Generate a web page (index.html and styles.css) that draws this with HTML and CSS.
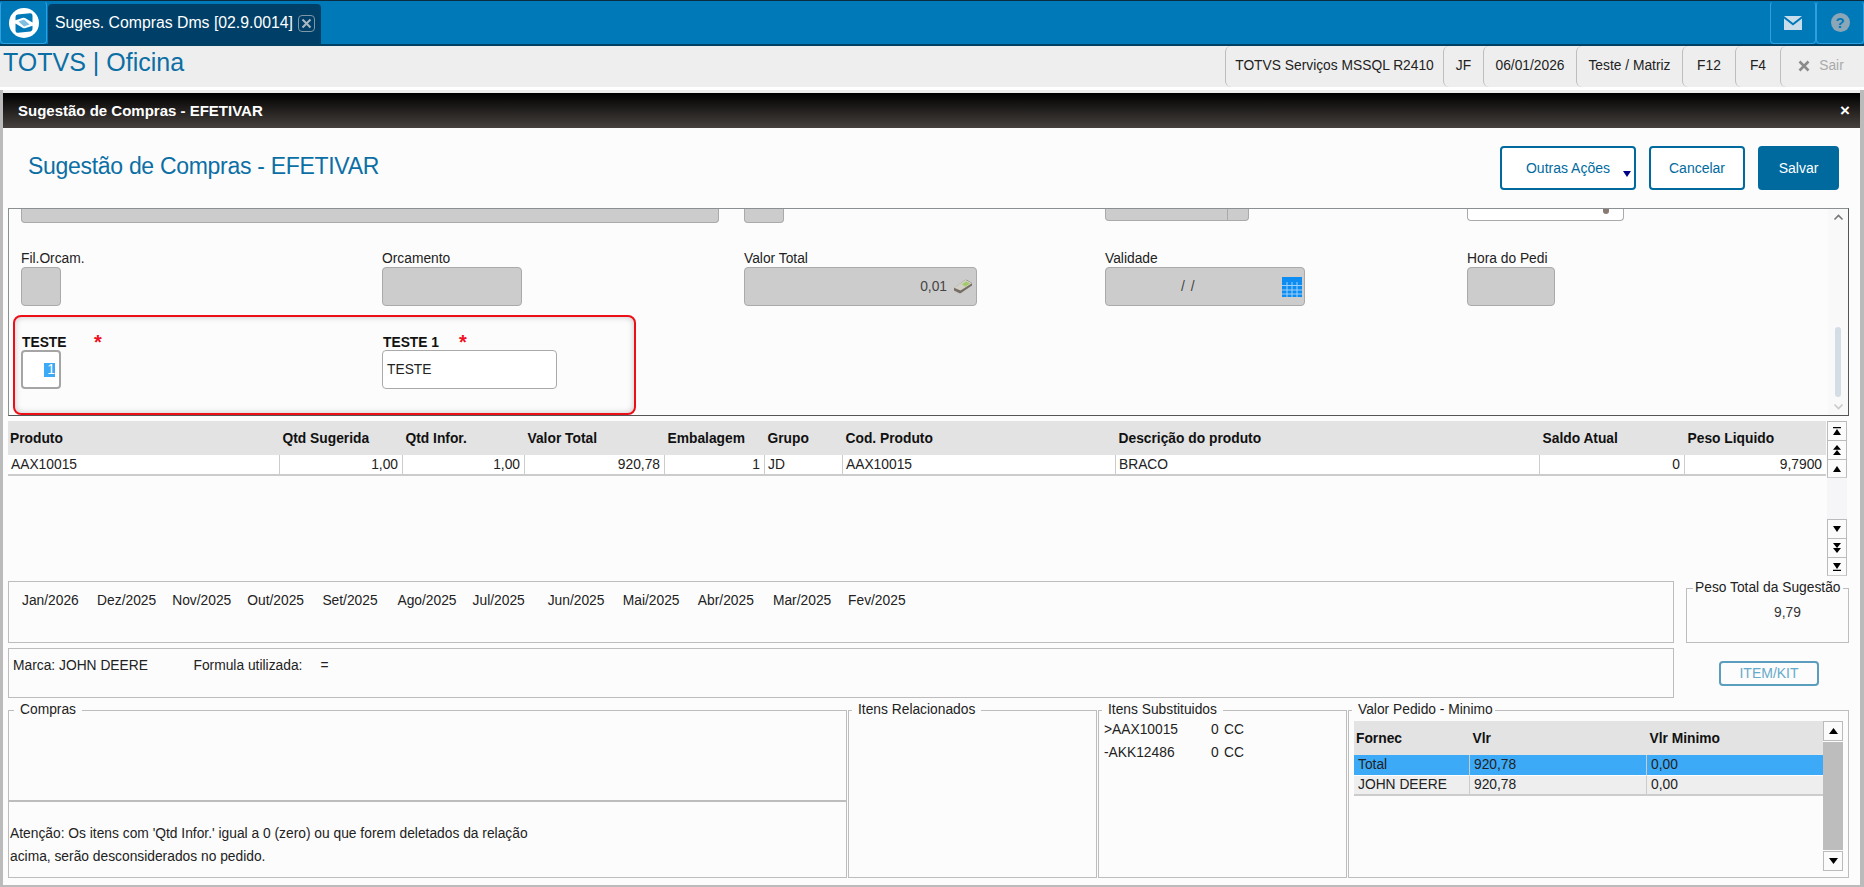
FILE: index.html
```html
<!DOCTYPE html>
<html lang="pt-BR">
<head>
<meta charset="utf-8">
<title>Sugestão de Compras - EFETIVAR</title>
<link rel="stylesheet" href="styles.css">
</head>
<body>
<div class="page">
  <header class="appbar">
    <div class="tile tile-logo">
      <svg width="32" height="32" viewBox="0 0 32 32"><circle cx="16" cy="16" r="15" fill="#fff"/><path d="M7.5 10 Q7.5 8 9.5 7.6 L22 6.2 Q24.5 6 24.5 9 V15.5 L17 11 Q16 10.5 15 10.8 L7.5 13.2Z" fill="#0079b8"/><path d="M24.5 22 Q24.5 24 22.5 24.4 L10 25.8 Q7.5 26 7.5 23 V16.5 L15 21 Q16 21.5 17 21.2 L24.5 18.8Z" fill="#0079b8"/><path d="M10.5 14.6 L16 12.6 L21.5 17.4 L16 19.4Z" fill="#7fc0e2"/></svg>
    </div>
    <div class="tab">
      <span>Suges. Compras Dms [02.9.0014]</span>
      <span class="tab-close"><svg width="11" height="11" viewBox="0 0 11 11"><path d="M1.5 1.5 L9.5 9.5 M9.5 1.5 L1.5 9.5" stroke="#a9b8c2" stroke-width="2"/></svg></span>
    </div>
    <div class="appbar-fill"></div>
    <div class="tile tile-tool">
      <svg width="22" height="14" viewBox="0 0 22 14"><path d="M0 0 H18 L9 7Z M0 2.4 L9 9.4 L18 2.4 V14 H0Z" fill="#c9deea" transform="translate(2 0)"/></svg>
    </div>
    <div class="tile tile-tool tile-help">
      <span class="help-dot">?</span>
    </div>
  </header>

  <div class="infobar">
    <div class="brand">TOTVS | Oficina</div>
    <nav class="segs">
      <span class="seg seg-env">TOTVS Serviços MSSQL R2410</span>
      <span class="seg seg-jf">JF</span>
      <span class="seg seg-date">06/01/2026</span>
      <span class="seg seg-branch">Teste / Matriz</span>
      <span class="seg seg-f12">F12</span>
      <span class="seg seg-f4">F4</span>
      <span class="seg seg-exit"><svg width="12" height="12" viewBox="0 0 12 12"><path d="M1.5 1.5 L10.5 10.5 M10.5 1.5 L1.5 10.5" stroke="#8b8b8b" stroke-width="2.6"/></svg>Sair</span>
    </nav>
  </div>

  <div class="stage">
    <main class="modal">
      <div class="modal-head">
        <span>Sugestão de Compras - EFETIVAR</span>
        <span class="modal-x">×</span>
      </div>
      <div class="modal-body">
        <div class="title-row">
          <h1>Sugestão de Compras - EFETIVAR</h1>
          <div class="actions">
            <button class="btn btn-more">Outras Ações<i class="caret"></i></button>
            <button class="btn btn-cancel">Cancelar</button>
            <button class="btn btn-save">Salvar</button>
          </div>
        </div>

        <section class="panel">
          <div class="form">
            <div class="form-grid clip-row">
              <div class="field off clip w-wide"></div>
              <div class="field off clip w-40"></div>
              <div class="field off clip clip-short w-split"><i class="split"></i></div>
              <div class="field clip clip-short w-white"><i class="crumb"></i></div>
            </div>
            <div class="form-grid label-row">
              <div><label class="lbl">Fil.Orcam.</label><div class="field off w-40"></div></div>
              <div><label class="lbl">Orcamento</label><div class="field off w-140"></div></div>
              <div><label class="lbl">Valor Total</label>
                <div class="field off w-233 val">0,01
                  <svg class="money" width="20" height="15" viewBox="0 0 20 15"><path d="M1 9 L12 1 Q13 .5 14 1 L19 4 V6.5 L8 14 Q7 14.6 6 14 L1 11.5Z" fill="#766e64"/><path d="M1 8.8 L12.5 .8 L19 4.2 L7.5 11.6Z" fill="#d2cfc6"/><path d="M9 5.6 L13 2.6 L17 4.6 L12.4 7.6Z" fill="#a0cc66"/></svg>
                </div>
              </div>
              <div><label class="lbl">Validade</label>
                <div class="field off w-200 val date"><span class="date-text">/ /</span>
                  <svg class="cal" width="20" height="20" viewBox="0 0 20 20"><rect width="20" height="20" fill="#0d8df2"/><path d="M0 8.5H20M0 13H20M0 17H20M5 5V20M10 5V20M15 5V20" stroke="#9fd0fa" stroke-width="1"/></svg>
                </div>
              </div>
              <div><label class="lbl">Hora do Pedi</label><div class="field off w-88"></div></div>
            </div>
            <div class="redbox">
              <div>
                <label class="lbl-strong"><span class="name-a">TESTE</span><span class="star">*</span></label>
                <div class="field focus w-40"><span class="sel">1</span></div>
              </div>
              <div>
                <label class="lbl-strong"><span class="name-b">TESTE 1</span><span class="star">*</span></label>
                <div class="field w-175 txt">TESTE</div>
              </div>
            </div>
          </div>
          <div class="vscroll">
            <svg class="chev" width="11" height="7" viewBox="0 0 11 7"><path d="M1.5 5.5 L5.5 1.5 L9.5 5.5" fill="none" stroke="#777" stroke-width="1.6"/></svg>
            <div class="thumb"></div>
            <svg class="chev chev-down" width="11" height="7" viewBox="0 0 11 7"><path d="M1.5 1.5 L5.5 5.5 L9.5 1.5" fill="none" stroke="#c9c9c9" stroke-width="1.6"/></svg>
          </div>
        </section>

        <section class="grid-block">
          <table class="tbl tbl-main">
            <colgroup><col class="c1"><col class="c2"><col class="c3"><col class="c4"><col class="c5"><col class="c6"><col class="c7"><col class="c8"><col class="c9"><col class="c10"></colgroup>
            <thead><tr><th>Produto</th><th>Qtd Sugerida</th><th>Qtd Infor.</th><th>Valor Total</th><th>Embalagem</th><th>Grupo</th><th>Cod. Produto</th><th>Descrição do produto</th><th>Saldo Atual</th><th>Peso Liquido</th></tr></thead>
            <tbody><tr><td>AAX10015</td><td class="r">1,00</td><td class="r">1,00</td><td class="r">920,78</td><td class="r">1</td><td>JD</td><td>AAX10015</td><td>BRACO</td><td class="r">0</td><td class="r">9,7900</td></tr></tbody>
          </table>
          <div class="nav-col">
            <div class="nav-btn"><svg class="i-bar" viewBox="0 0 13 12" preserveAspectRatio="none"><path d="M0 0H13V2H0Z M6.5 3 L13 12 H0Z"/></svg></div>
            <div class="nav-btn"><svg class="i-dbl" viewBox="0 0 13 14" preserveAspectRatio="none"><path d="M6.5 0 L13 6.5 H0Z M6.5 7 L13 14 H0Z"/></svg></div>
            <div class="nav-btn nav-end"><svg class="i-one" viewBox="0 0 13 8" preserveAspectRatio="none"><path d="M6.5 0 L13 8 H0Z"/></svg></div>
            <div class="nav-track"></div>
            <div class="nav-btn"><svg class="i-one" viewBox="0 0 13 8" preserveAspectRatio="none"><path d="M0 0 H13 L6.5 8Z"/></svg></div>
            <div class="nav-btn"><svg class="i-dbl" viewBox="0 0 13 14" preserveAspectRatio="none"><path d="M0 0 H13 L6.5 7Z M0 7 H13 L6.5 14Z"/></svg></div>
            <div class="nav-btn nav-end"><svg class="i-bar" viewBox="0 0 13 12" preserveAspectRatio="none"><path d="M0 0 H13 L6.5 9Z M0 10H13V12H0Z"/></svg></div>
          </div>
        </section>

        <section class="mid">
          <div class="mid-left">
            <div class="box months">
              <span>Jan/2026</span><span>Dez/2025</span><span>Nov/2025</span><span>Out/2025</span><span>Set/2025</span><span>Ago/2025</span><span>Jul/2025</span><span>Jun/2025</span><span>Mai/2025</span><span>Abr/2025</span><span>Mar/2025</span><span>Fev/2025</span>
            </div>
            <div class="box marca">
              <span>Marca: JOHN DEERE</span><span>Formula utilizada:</span><span>=</span>
            </div>
          </div>
          <div class="mid-right">
            <fieldset class="fs fs-peso"><legend>Peso Total da Sugestão</legend><div class="peso-val">9,79</div></fieldset>
            <button class="btn-kit">ITEM/KIT</button>
          </div>
        </section>

        <section class="bottom">
          <fieldset class="fs fs-compras"><legend class="lg-first">Compras</legend>
            <div class="compras-top"></div>
            <p class="note">Atenção: Os itens com 'Qtd Infor.' igual a 0 (zero) ou que forem deletados da relação<br>acima, serão desconsiderados no pedido.</p>
          </fieldset>
          <fieldset class="fs fs-rel"><legend>Itens Relacionados</legend></fieldset>
          <fieldset class="fs fs-sub"><legend>Itens Substituidos</legend>
            <div class="sub-list"><span>&gt;AAX10015</span><span>0</span><span>CC</span><span>-AKK12486</span><span>0</span><span>CC</span></div>
          </fieldset>
          <fieldset class="fs fs-val"><legend>Valor Pedido - Minimo</legend>
            <div class="val-wrap">
              <table class="tbl tbl-val">
                <colgroup><col class="v1"><col class="v2"><col class="v3"></colgroup>
                <thead><tr><th>Fornec</th><th>Vlr</th><th>Vlr Minimo</th></tr></thead>
                <tbody>
                  <tr class="row-sel"><td>Total</td><td>920,78</td><td>0,00</td></tr>
                  <tr class="row-alt"><td>JOHN DEERE</td><td>920,78</td><td>0,00</td></tr>
                </tbody>
              </table>
              <div class="val-scroll">
                <div class="nav-btn val-btn"><svg width="9" height="6" viewBox="0 0 9 6"><path d="M4.5 0 L9 6 H0Z"/></svg></div>
                <div class="val-track"></div>
                <div class="nav-btn val-btn"><svg width="9" height="6" viewBox="0 0 9 6"><path d="M0 0 H9 L4.5 6Z"/></svg></div>
              </div>
            </div>
          </fieldset>
        </section>
      </div>
    </main>
  </div>
</div>
</body>
</html>
```
FILE: styles.css
```css
* { box-sizing: border-box; }
html, body { margin: 0; padding: 0; }
body { font-family: "Liberation Sans", Arial, sans-serif; font-size: 13.8px; color: #222; }
.page { width: 1864px; height: 887px; display: flex; flex-direction: column; overflow: hidden; background: #bbb; }

/* app bar */
.appbar { height: 46px; flex: none; display: flex; background: #0079b8; border-top: 1px solid #0b2b40; border-bottom: 2px solid #004063; }
.tile { display: flex; align-items: center; justify-content: center; border: 1px solid #2f9fe0; border-top-color: #0079b8; border-radius: 4px; }
.tile-logo { width: 47px; margin-right: 1px; }
.tab { width: 273px; margin-top: 3px; display: flex; align-items: center; padding: 0 6px 2px 7px; justify-content: space-between; background: #004068; color: #fff; font-size: 15.8px; border-radius: 4px 4px 0 0; }
.tab-close { width: 17px; height: 17px; display: flex; align-items: center; justify-content: center; border: 1px solid #7f97a7; border-radius: 4px; }
.appbar-fill { flex: 1; }
.tile-tool { width: 46px; }
.tile-help { width: 48px; }
.help-dot { width: 19px; height: 19px; border-radius: 50%; background: #8ba6b7; color: #0079b8; font-weight: 700; font-size: 15px; line-height: 19px; text-align: center; }

/* info bar */
.infobar { height: 41px; flex: none; display: flex; justify-content: space-between; background: #eee; }
.brand { font-size: 25px; line-height: 33px; padding-left: 3px; color: #0b6fa5; }
.segs { display: flex; }
.seg { display: flex; align-items: center; justify-content: center; border-left: 1px solid #bdbdbd; border-radius: 6px 0 0 6px; color: #222; padding-bottom: 2px; }
.seg-env { width: 218px; }
.seg-jf { width: 40px; }
.seg-date { width: 93px; }
.seg-branch { width: 106px; }
.seg-f12 { width: 53px; }
.seg-f4 { width: 45px; }
.seg-exit { width: 84px; color: #aaa; gap: 9px; padding-right: 3px; }

/* stage + modal */
.stage { flex: 1; min-height: 0; display: flex; border-top: 3px solid #fff; padding: 0 4px 2px 3px; }
.modal { flex: 1; display: flex; flex-direction: column; border-top: 3px solid #eee; background: #fcfcfc; }
.modal-head { height: 35px; flex: none; display: flex; align-items: center; justify-content: space-between; padding: 0 10px 0 15px; background: linear-gradient(#000, #46413e); color: #fff; font-weight: 700; font-size: 15px; }
.modal-x { font-size: 17px; font-weight: 700; line-height: 20px; }
.modal-body { flex: 1; display: flex; flex-direction: column; min-height: 0; }

.title-row { height: 80px; flex: none; display: flex; justify-content: space-between; padding: 18px 21px 0 25px; }
h1 { margin: 0; font-size: 23px; letter-spacing: -.3px; line-height: 40px; font-weight: 400; color: #0b6fa5; }
.actions { display: flex; gap: 13px; }
.btn { position: relative; height: 44px; font: 14px "Liberation Sans", Arial, sans-serif; color: #006a9f; background: #fff; border: 2px solid #006a9f; border-radius: 4px; padding: 0; }
.btn-more { width: 136px; }
.btn-cancel { width: 96px; }
.btn-save { width: 81px; background: #006a9f; color: #fff; }
.caret { position: absolute; right: 3px; bottom: 11px; width: 0; height: 0; border: 4.5px solid transparent; border-top: 6px solid #00008b; border-bottom: 0; }

/* upper panel */
.panel { height: 208px; flex: none; margin: 0 11px 0 5px; display: flex; border: 1px solid #8a8f91; border-bottom-color: #555; border-right-color: #555; }
.form { flex: 1; min-width: 0; overflow: hidden; }
.form-grid { display: grid; grid-template-columns: 361px 362px 361px 362px 1fr; padding-left: 12px; }
.clip-row { height: 14px; align-items: start; }
.field { height: 39px; border: 1px solid #aaa; border-radius: 4px; background: #fff; }
.field.off { background: #ccc; }
.clip { height: 14px; border-top: 0; border-radius: 0 0 4px 4px; }
.clip-short { height: 12px; }
.w-wide { width: 698px; grid-column: span 2; }
.w-40 { width: 40px; }
.w-split { width: 144px; position: relative; }
.split { position: absolute; left: 121px; top: 0; bottom: 0; border-left: 1px solid #aaa; }
.w-white { width: 157px; position: relative; }
.crumb { position: absolute; right: 14px; top: 0; width: 6px; height: 5px; background: #8a7b72; border-radius: 0 0 3px 3px; }
.w-140 { width: 140px; }
.w-233 { width: 233px; }
.w-200 { width: 200px; }
.w-88 { width: 88px; }
.w-175 { width: 175px; }
.label-row { margin-top: 26px; }
.lbl { display: block; height: 18px; line-height: 19px; color: #222; }
.val { display: flex; align-items: center; justify-content: flex-end; padding-right: 3px; color: #444; }
.money { margin-left: 6px; }
.date { justify-content: flex-start; padding-right: 2px; }
.date-text { margin-left: 75px; margin-right: auto; word-spacing: 2px; }
.redbox { width: 623px; height: 100px; margin: 9px 0 0 4px; display: grid; grid-template-columns: 361px 1fr; padding: 18px 0 0 6px; border: 2px solid #ec0f18; border-radius: 8px; box-shadow: inset 0 0 6px rgba(0,0,0,.22); }
.lbl-strong { display: flex; height: 15px; line-height: 16px; font-weight: 700; color: #111; padding-left: 1px; }
.name-a { width: 72px; }
.name-b { width: 76px; }
.star { color: #f01020; font-size: 20px; line-height: 15px; font-weight: 700; }
.focus { display: flex; align-items: center; justify-content: flex-end; padding-right: 4px; border: 2px solid #a5a5a5; }
.sel { width: 11px; height: 14px; line-height: 14px; text-align: right; background: #3daaf8; color: #fff; }
.txt { display: flex; align-items: center; padding: 0 0 1px 4px; color: #222; }
.vscroll { width: 20px; flex: none; display: flex; flex-direction: column; align-items: center; padding-top: 5px; background: #f9f9f9; }
.thumb { width: 6px; height: 70px; margin-top: auto; background: #d3dde5; border-radius: 3px; }
.chev-down { margin: 6px 0 5px; }

/* main grid */
.tbl { table-layout: fixed; border-collapse: separate; border-spacing: 0; }
.tbl th { height: 34px; padding: 0 0 0 2.5px; background: #e3e3e3; text-align: left; font-weight: 700; color: #111; }
.tbl th:first-child { padding-left: 2px; }
.tbl td { height: 21px; padding: 0 4px 0 3px; border-right: 1px solid #ccc; border-bottom: 2px solid #ccc; background: #fff; color: #222; white-space: nowrap; }
.tbl td:last-child { border-right: 0; }
.tbl .r { text-align: right; }
.grid-block { height: 155px; flex: none; margin: 5px 0 0 5px; display: flex; align-items: flex-start; gap: 1px; }
.tbl-main { width: 1818px; }
.c1 { width: 272px; } .c2 { width: 123px; } .c3 { width: 122px; } .c4 { width: 140px; } .c5 { width: 100px; }
.c6 { width: 78px; } .c7 { width: 273px; } .c8 { width: 424px; } .c9 { width: 145px; } .c10 { width: 141px; }
.nav-col { width: 20px; height: 155px; display: flex; flex-direction: column; }
.nav-btn { height: 19px; flex: none; display: flex; align-items: center; justify-content: center; background: #fbfbfb; border: 1px solid #bbb; border-bottom: 0; }
.nav-btn svg { fill: #000; }
.i-bar { width: 8px; height: 8px; }
.i-dbl { width: 8px; height: 10px; }
.i-one { width: 8px; height: 6px; }
.nav-end { border-bottom: 1px solid #ccc; }
.nav-track { flex: 1; background: #f6f6f9; }

/* middle */
.mid { height: 122px; flex: none; margin: 4px 0 0 5px; display: flex; align-items: flex-start; }
.mid-left { width: 1666px; display: flex; flex-direction: column; gap: 5px; margin-top: 1px; }
.box { border: 1px solid #bdbdbd; }
.months { height: 62px; display: grid; grid-template-columns: repeat(12, 75.1px); padding: 10px 0 0 13px; line-height: 18px; align-items: start; }
.marca { height: 50px; display: grid; grid-template-columns: 180.5px 127px auto; padding: 8px 0 0 4px; line-height: 18px; align-items: start; }
.mid-right { width: 163px; margin-left: 12px; }
.fs { margin: 0; padding: 0; min-width: 0; border: 1px solid #bdbdbd; }
.fs legend { padding: 0 6px; margin-left: 3px; height: 16px; line-height: 16px; color: #222; white-space: nowrap; }
.fs-peso { height: 63px; }
.fs-peso legend { padding: 0 2px; margin-left: 6px; }
.peso-val { padding: 8px 0 0 87px; line-height: 18px; color: #333; }
.btn-kit { display: block; width: 100px; height: 25px; margin: 18px 0 0 33px; padding: 0 0 2px; font: 14px "Liberation Sans", Arial, sans-serif; color: #66aacb; background: #fcfcfc; border: 2px solid #5a9dbd; border-radius: 4px; }

/* bottom */
.bottom { margin: 0 0 0 5px; height: 176px; flex: none; display: flex; gap: 1px; }
.fs-compras { width: 839px; height: 176px; }
.fs-compras .lg-first { margin-left: 5px; }
.fs-rel { width: 249px; height: 176px; }
.fs-sub { width: 249px; height: 176px; }
.fs-val { width: 501px; height: 176px; }
.fs-val legend { padding: 0 2px 0 6px; }
.compras-top { height: 84px; border-bottom: 2px solid #bdbdbd; }
.note { margin: 0; padding: 20px 0 0 1px; line-height: 23px; }
.sub-list { display: grid; grid-template-columns: 107px 13px auto; padding-left: 5px; line-height: 23px; justify-content: start; }
.val-wrap { display: flex; align-items: flex-start; padding: 3px 0 0 5px; }
.tbl-val { width: 469px; }
.v1 { width: 116px; } .v2 { width: 177px; } .v3 { width: 176px; }
.tbl-val td { height: 20.5px; border-bottom: 1px solid #ccc; border-right: 1px solid #ccc; padding: 0 2px 0 4px; color: #222; }
.tbl-val .row-sel td { background: #3daaf8; border-bottom: 1px solid #fff; }
.tbl-val .row-alt td { background: #eee; border-bottom: 2px solid #ccc; }
.val-scroll { width: 20px; height: 150px; display: flex; flex-direction: column; }
.val-btn { height: 20px; border: 1px solid #bbb; }
.val-track { flex: 1; background: #bdbdbd; margin: 1px 0; }
```
